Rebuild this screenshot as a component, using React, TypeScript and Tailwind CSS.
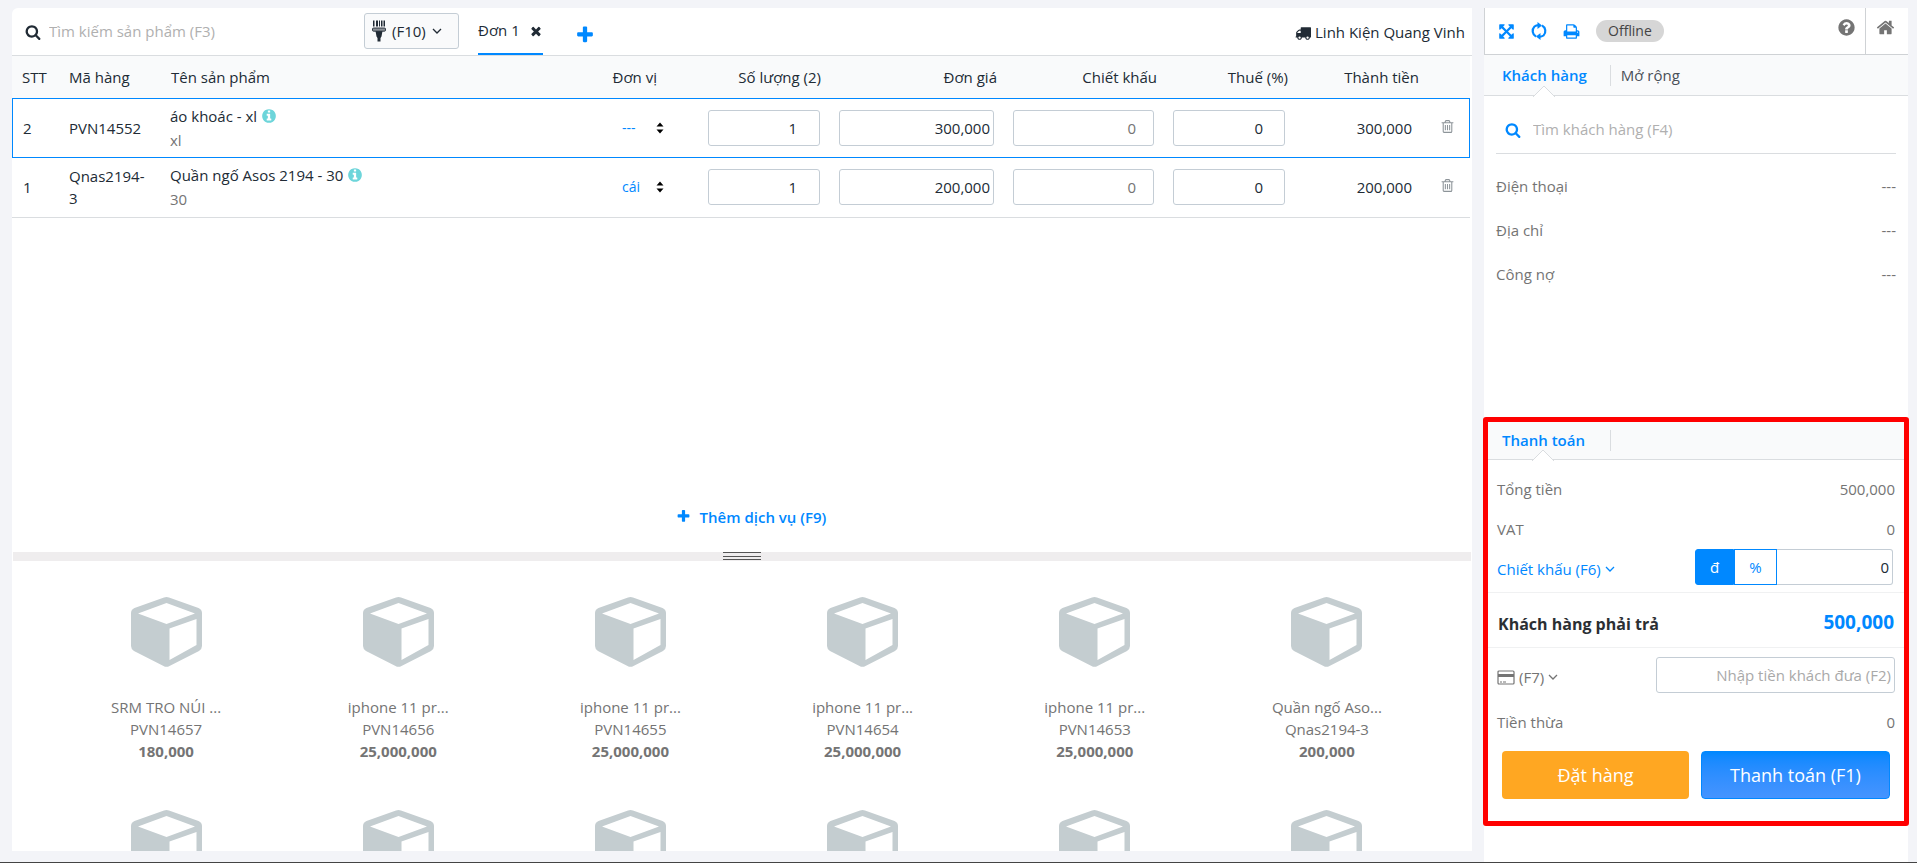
import React, { useState } from "react";

const circle =
  "M1664 896q0 209-103 385.5t-279.5 279.5-385.5 103-385.5-103-279.5-279.5-103-385.5 103-385.5 279.5-279.5 385.5-103 385.5 103 279.5 279.5 103 385.5z";

const paths = {
  search:
    "M1216 832q0-185-131.5-316.5t-316.5-131.5-316.5 131.5-131.5 316.5 131.5 316.5 316.5 131.5 316.5-131.5 131.5-316.5zm512 832q0 52-38 90t-90 38q-54 0-90-38l-343-342q-179 124-399 124-143 0-273.5-55.5t-225-150-150-225-55.5-273.5 55.5-273.5 150-225 225-150 273.5-55.5 273.5 55.5 225 150 150 225 55.5 273.5q0 220-124 399l343 343q37 37 37 90z",
  close:
    "M1490 1322q0 40-28 68l-136 136q-28 28-68 28t-68-28l-294-294-294 294q-28 28-68 28t-68-28l-136-136q-28-28-28-68t28-68l294-294-294-294q-28-28-28-68t28-68l136-136q28-28 68-28t68 28l294 294 294-294q28-28 68-28t68 28l136 136q28 28 28 68t-28 68l-294 294 294 294q28 28 28 68z",
  plus: "M1600 736v192q0 40-28 68t-68 28h-416v416q0 40-28 68t-68 28h-192q-40 0-68-28t-28-68v-416h-416q-40 0-68-28t-28-68v-192q0-40 28-68t68-28h416v-416q0-40 28-68t68-28h192q40 0 68 28t28 68v416h416q40 0 68 28t28 68z",
  truck:
    "M640 1408q0-52-38-90t-90-38-90 38-38 90 38 90 90 38 90-38 38-90zm-384-512h384v-256h-158q-13 0-22 9l-195 195q-9 9-9 22v30zm1280 512q0-52-38-90t-90-38-90 38-38 90 38 90 90 38 90-38 38-90zm256-1088v1024q0 15-4 26.5t-13.5 18.5-16.5 11.5-23.5 6-22.5 2-25.5 0-22.5-.5q0 106-75 181t-181 75-181-75-75-181h-384q0 106-75 181t-181 75-181-75-75-181h-64q-3 0-22.5.5t-25.5 0-22.5-2-23.5-6-16.5-11.5-13.5-18.5-4-26.5q0-26 19-45t45-19v-320q0-8-.5-35t0-38 2.5-34.5 6.5-37 14-30.5 22.5-30l198-198q19-19 50.5-32t58.5-13h160v-192q0-26 19-45t45-19h1024q26 0 45 19t19 45z",
  info:
    "M1152 1376v-160q0-14-9-23t-23-9h-96v-512q0-14-9-23t-23-9h-320q-14 0-23 9t-9 23v160q0 14 9 23t23 9h96v320h-96q-14 0-23 9t-9 23v160q0 14 9 23t23 9h448q14 0 23-9t9-23zm-128-896v-160q0-14-9-23t-23-9h-192q-14 0-23 9t-9 23v160q0 14 9 23t23 9h192q14 0 23-9t9-23z" +
    circle,
  question:
    "M1024 1376v-192q0-14-9-23t-23-9h-192q-14 0-23 9t-9 23v192q0 14 9 23t23 9h192q14 0 23-9t9-23zm256-672q0-88-55.5-163t-138.5-116-170-41q-243 0-371 213-15 24 8 42l132 100q7 6 19 6 16 0 25-12 53-68 86-92 34-24 86-24 48 0 85.5 26t37.5 59q0 38-20 61t-68 45q-63 28-115.5 86.5t-52.5 125.5v36q0 14 9 23t23 9h192q14 0 23-9t9-23q0-19 21.5-49.5t54.5-49.5q32-18 49-28.5t46-35 44.5-48 28-60.5 12.5-81z" +
    circle,
  home: "M1472 992v480q0 26-19 45t-45 19h-384v-384h-256v384h-384q-26 0-45-19t-19-45v-480q0-1 .5-3t.5-3l575-474 575 474q1 2 1 6zm223-69l-62 74q-8 9-21 11h-3q-13 0-21-7l-692-577-692 577q-12 8-24 7-13-2-21-11l-62-74q-8-10-7-23.5t11-21.5l719-599q32-26 76-26t76 26l244 204v-195q0-14 9-23t23-9h192q14 0 23 9t9 23v408l219 182q10 8 11 21.5t-7 23.5z",
  print:
    "M448 1536h896v-256h-896v256zm0-640h896v-384h-160q-40 0-68-28t-28-68v-160h-640v640zm1152 64q0-26-19-45t-45-19-45 19-19 45 19 45 45 19 45-19 19-45zm128 0v416q0 13-9.500 22.500t-22.500 9.500h-224v160q0 40-28 68t-68 28h-960q-40 0-68-28t-28-68v-160h-224q-13 0-22.500-9.500t-9.500-22.500v-416q0-79 56.500-135.500t135.500-56.500h64v-544q0-40 28-68t68-28h672q40 0 88 20t76 48l152 152q28 28 48 76t20 88v256h64q79 0 135.500 56.500t56.500 135.500z",
  trash:
    "M704 736v576q0 14-9 23t-23 9h-64q-14 0-23-9t-9-23v-576q0-14 9-23t23-9h64q14 0 23 9t9 23zm256 0v576q0 14-9 23t-23 9h-64q-14 0-23-9t-9-23v-576q0-14 9-23t23-9h64q14 0 23 9t9 23zm256 0v576q0 14-9 23t-23 9h-64q-14 0-23-9t-9-23v-576q0-14 9-23t23-9h64q14 0 23 9t9 23zm128 724v-948h-896v948q0 22 7 40.5t14.5 27 10.5 8.5h832q3 0 10.5-8.5t14.5-27 7-40.5zm-672-1076h448l-48-117q-7-9-17-11h-317q-10 2-17 11zm928 32v64q0 14-9 23t-23 9h-96v948q0 83-47 143.5t-113 60.5h-832q-66 0-113-58.5t-47-141.5v-952h-96q-14 0-23-9t-9-23v-64q0-14 9-23t23-9h309l70-167q15-37 54-63t79-26h320q40 0 79 26t54 63l70 167h309q14 0 23 9t9 23z",
  expand:
    "M1411 541l-355 355 355 355 144-144q29-31 70-14 39 17 39 59v448q0 26-19 45t-45 19h-448q-42 0-59-40-17-39 14-69l144-144-355-355-355 355 144 144q31 30 14 69-17 40-59 40h-448q-26 0-45-19t-19-45v-448q0-42 40-59 39-17 69 14l144 144 355-355-355-355-144 144q-19 19-45 19-12 0-24-5-40-17-40-59v-448q0-26 19-45t45-19h448q42 0 59 40 17 39-14 69l-144 144 355 355 355-355-144-144q-31-30-14-69 17-40 59-40h448q26 0 45 19t19 45v448q0 42-39 59-13 5-25 5-26 0-45-19z",
};

function Icon({ name, className }: { name: keyof typeof paths; className: string }) {
  return (
    <svg viewBox="0 0 1792 1792" fill="currentColor" fillRule="evenodd" className={className} aria-hidden="true">
      <path d={paths[name]} />
    </svg>
  );
}

function Chevron() {
  return (
    <svg viewBox="0 0 10 10" className="size-[10px]" fill="none" stroke="currentColor" strokeWidth="1.3" aria-hidden="true">
      <path d="M1 3l4 4 4-4" />
    </svg>
  );
}

function ScannerIcon() {
  return (
    <svg viewBox="0 0 14 22" className="h-[22px] w-[14px]" aria-hidden="true">
      <path fill="#212b35" d="M1 .5h1.500v6H1zM4 .5h2v6H4zM7 .5h1v6H7zM9 .5h1.500v6H9zM11.500 .5H13v6h-1.500zM3.500 11h7L9.500 16.500 8.500 18v3.500h-3V18l-1-1.500z" />
      <rect x=".5" y="8" width="13" height="3.200" rx="1" fill="#8b9096" stroke="#212b35" strokeWidth=".9" />
    </svg>
  );
}

function RefreshIcon() {
  return (
    <svg viewBox="0 0 16 18" className="h-[18px] w-4" fill="none" stroke="currentColor" strokeWidth="2.200" aria-hidden="true">
      <path d="M5 14.500A6.300 6.300 0 0 1 3.500 4.500Q5 3.300 8 3.200M11 3.500a6.300 6.300 0 0 1 1.500 10Q11 14.700 8 14.800" />
      <path d="M6.500 0l4.500 3.400-4.500 3.600zM9.500 11v7L5 14.600z" fill="currentColor" stroke="none" />
    </svg>
  );
}

function CardIcon() {
  return (
    <svg viewBox="0 0 18 15" className="h-[15px] w-[18px]" fill="none" stroke="currentColor" aria-hidden="true">
      <rect x="1" y="1" width="16" height="13" rx="1" strokeWidth="1.200" />
      <path d="M1 5.500h16" strokeWidth="3" />
      <path d="M3 12h2M6 12h3" />
    </svg>
  );
}

function Cube() {
  return (
    <svg viewBox="0 0 71 70" className="h-[70px] w-[71px]" aria-hidden="true">
      <path
        fill="#c4cdd0"
        fillRule="evenodd"
        d="M33 .6q2.500-1 5 0L67.500 11q3.500 1.500 3.500 5v33q0 3-3 5L38.500 69q-3 1.700-6 0L3 54q-3-2-3-5V16q0-3.500 3.500-5zM35.500 6L7 16.500 35.500 27 64 16.500zM38.500 31.500V63L65.500 48V22z"
      />
    </svg>
  );
}

const products = [
  { name: "SRM TRO NÚI ...", code: "PVN14657", price: "180,000" },
  { name: "iphone 11 pr...", code: "PVN14656", price: "25,000,000" },
  { name: "iphone 11 pr...", code: "PVN14655", price: "25,000,000" },
  { name: "iphone 11 pr...", code: "PVN14654", price: "25,000,000" },
  { name: "iphone 11 pr...", code: "PVN14653", price: "25,000,000" },
  { name: "Quần ngố Aso...", code: "Qnas2194-3", price: "200,000" },
];

const lines = [
  { no: 2, code: "PVN14552", name: "áo khoác - xl", variant: "xl", unit: "---", price: "300,000" },
  { no: 1, code: "Qnas2194-3", name: "Quần ngố Asos 2194 - 30", variant: "30", unit: "cái", price: "200,000" },
];

const field = "h-9 w-full rounded-[3px] border border-[#c4cdd5] bg-white text-right outline-none";

function OrderTable() {
  return (
    <table className="w-full table-fixed border-collapse text-[#212b35]">
      <colgroup>
        <col className="w-[46px]" />
        <col className="w-[102px]" />
        <col />
        <col className="w-[104px]" />
        <col className="w-[131px]" />
        <col className="w-[174px]" />
        <col className="w-[160px]" />
        <col className="w-[131px]" />
        <col className="w-[126px]" />
        <col className="w-[40px]" />
      </colgroup>
      <thead>
        <tr className="h-[42px] border-b border-[#dadde0] bg-[#f9fafb] text-right font-medium">
          <th className="pl-[10px] text-left font-medium">STT</th>
          <th className="pl-[11px] text-left font-medium">Mã hàng</th>
          <th className="pl-[11px] text-left font-medium">Tên sản phẩm</th>
          <th className="pr-[51px] font-medium whitespace-nowrap">Đơn vị</th>
          <th className="pr-[18px] font-medium">Số lượng (2)</th>
          <th className="pr-4 font-medium">Đơn giá</th>
          <th className="pr-4 font-medium">Chiết khấu</th>
          <th className="pr-4 font-medium">Thuế (%)</th>
          <th className="pr-[11px] font-medium">Thành tiền</th>
          <th aria-label="Xóa" />
        </tr>
      </thead>
      <tbody>
        {lines.map((l, i) => (
          <tr
            key={l.no}
            className={i === 0 ? "h-[60px] outline outline-1 -outline-offset-1 outline-[#0088ff]" : "h-[59px] border-b border-[#dadde0]"}
          >
            <td className="pl-[11px]">{l.no}</td>
            <td className="pr-3 pl-[11px] leading-[22px]">{l.code}</td>
            <td className="pl-[10px] leading-6">
              <div className="flex items-center gap-1">
                {l.name}
                <Icon name="info" className="size-4 text-[#6dd5da]" />
              </div>
              <div className="text-[#747474]">{l.variant}</div>
            </td>
            <td>
              <button className="flex w-full items-center justify-between pr-[44px] pl-[18px] text-sm text-[#0088ff]">
                {l.unit}
                <svg viewBox="0 0 8 12" className="h-3 w-2 fill-black" aria-hidden="true">
                  <path d="M.5 4.500L4 .5l3.500 4zM.5 7.500l3.500 4 3.500-4z" />
                </svg>
              </button>
            </td>
            <td className="pr-[19px]">
              <input aria-label="Số lượng" defaultValue="1" className={field + " pr-[22px]"} />
            </td>
            <td className="pr-[19px]">
              <input aria-label="Đơn giá" defaultValue={l.price} className={field + " pr-[3px]"} />
            </td>
            <td className="pr-[19px]">
              <input aria-label="Chiết khấu" defaultValue="0" className={field + " pr-[17px] text-[#747474]"} />
            </td>
            <td className="pr-[19px]">
              <input aria-label="Thuế" defaultValue="0" className={field + " pr-[21px]"} />
            </td>
            <td className="pr-[18px] text-right">{l.price}</td>
            <td>
              <button aria-label="Xóa" className="block pb-1 pl-[10px] text-[#8d9499]">
                <Icon name="trash" className="size-[15px]" />
              </button>
            </td>
          </tr>
        ))}
      </tbody>
    </table>
  );
}

function Row({ label, value }: { label: string; value: string }) {
  return (
    <div className="flex justify-between">
      <span>{label}</span>
      <span>{value}</span>
    </div>
  );
}

function Notch() {
  return (
    <svg viewBox="0 0 22 12" className="absolute -bottom-px left-1/2 h-3 w-[22px] -translate-x-1/2" aria-hidden="true">
      <path d="M0 12L11 1l11 11" fill="#fff" stroke="#dadde0" />
    </svg>
  );
}

function Sidebar() {
  const [unit, setUnit] = useState("đ");
  const on = "bg-[#0088ff] text-white";
  const off = "bg-white text-[#0088ff]";
  return (
    <aside className="flex w-[424px] shrink-0 flex-col bg-white text-[#747474]">
      <div className="flex h-[47px] items-stretch border-b border-l border-[#cfd2d5]">
        <div className="flex flex-1 items-center gap-4 pl-[13px] text-[#0088ff]">
          <button aria-label="Toàn màn hình"><Icon name="expand" className="size-[17px]" /></button>
          <button aria-label="Làm mới"><RefreshIcon /></button>
          <button aria-label="In"><Icon name="print" className="size-[17px]" /></button>
          <span className="rounded-full bg-[#d6d6d6] px-3 text-sm leading-[22px] text-[#444]">Offline</span>
        </div>
        <button aria-label="Trợ giúp" className="pr-[9px] pb-2"><Icon name="question" className="size-[19px]" /></button>
        <a href="#home" aria-label="Trang chủ" className="flex w-[43px] items-center justify-center border-l border-[#cfd2d5] pr-1 pb-2">
          <Icon name="home" className="size-[19px]" />
        </a>
      </div>
      <nav className="flex h-[41px] items-center border-b border-[#dadde0] bg-[#f9fafb] font-semibold">
        <a href="#customer" className="relative ml-[18px] flex h-[41px] items-center text-[#0088ff]">
          Khách hàng
          <Notch />
        </a>
        <a href="#more" className="ml-[23px] border-l border-[#dadde0] pl-[10px] leading-[21px] font-medium text-[#4a5058]">Mở rộng</a>
      </nav>
      <div className="flex-1 px-3">
        <label className="mt-[10px] flex h-12 items-center gap-3 border-b border-[#dadde0] pl-[9px]">
          <Icon name="search" className="size-4 shrink-0 text-[#0088ff]" />
          <input aria-label="Tìm khách hàng" placeholder="Tìm khách hàng (F4)" className="w-full outline-none placeholder:text-[#b0b0b0]" />
        </label>
        <div className="mt-[21px] flex flex-col gap-[22px] leading-[22px]">
          <Row label="Điện thoại" value="---" />
          <Row label="Địa chỉ" value="---" />
          <Row label="Công nợ" value="---" />
        </div>
      </div>
      <section className="-mx-px mb-9 h-[409px] rounded-[3px] border-5 border-[#ff0000]">
        <div className="flex h-[38px] items-center border-b border-[#dadde0] bg-[#f9fafb] font-semibold">
          <a href="#payment" className="relative ml-[14px] flex h-[38px] items-center text-[#0088ff]">
            Thanh toán
            <Notch />
          </a>
          <span className="ml-[25px] h-[21px] border-l border-[#dadde0]" />
        </div>
        <div className="flex flex-col gap-[18px] px-[9px] pt-[18px] leading-[22px]">
          <Row label="Tổng tiền" value="500,000" />
          <Row label="VAT" value="0" />
        </div>
        <div className="mt-[9px] flex h-[44px] items-start justify-between border-b border-[#f0f1f2] pr-[11px] pl-[9px]">
          <button className="flex h-10 items-center gap-1 text-[#0088ff]">
            Chiết khấu (F6) <Chevron />
          </button>
          <div className="flex h-9">
            <button onClick={() => setUnit("đ")} className={"w-[39px] rounded-l-[3px] border border-[#0088ff] " + (unit === "đ" ? on : off)}>đ</button>
            <button onClick={() => setUnit("%")} className={"w-[43px] border border-[#0088ff] " + (unit === "%" ? on : off)}>%</button>
            <input aria-label="Chiết khấu" defaultValue="0" className="h-9 w-[116px] rounded-r-[3px] border border-l-0 border-[#c4cdd5] pr-[3px] text-right text-[#212b35] outline-none" />
          </div>
        </div>
        <div className="flex h-[55px] items-center justify-between border-b border-[#f0f1f2] px-[10px] pt-1">
          <span className="pt-1 text-base font-bold text-[#2b2f33]">Khách hàng phải trả</span>
          <span className="text-[19px] font-bold text-[#0088ff]">500,000</span>
        </div>
        <div className="mt-[9px] flex h-9 items-center justify-between px-[9px]">
          <button className="flex items-center gap-1 pt-1">
            <CardIcon /> (F7) <Chevron />
          </button>
          <input aria-label="Nhập tiền khách đưa" placeholder="Nhập tiền khách đưa (F2)" className="h-9 w-[239px] rounded-[3px] border border-[#c4cdd5] pr-[3px] text-right outline-none placeholder:text-[#a9a9a9]" />
        </div>
        <div className="mt-[18px] px-[9px] leading-[22px]">
          <Row label="Tiền thừa" value="0" />
        </div>
        <div className="mt-[18px] flex gap-3 px-[14px] text-lg text-white">
          <button className="h-12 flex-1 rounded-[4px] bg-[#ffa722]">Đặt hàng</button>
          <button className="h-12 flex-1 rounded-[4px] border border-[#0088ff] bg-linear-to-b from-[#0088ff] to-[#4594ff]">Thanh toán (F1)</button>
        </div>
      </section>
    </aside>
  );
}

export default function App() {
  return (
    <div className="flex h-screen gap-3 overflow-hidden border-b border-[#444] bg-[#f3f4f8] pt-2 pr-[9px] pl-3 font-['Open_Sans','Noto_Sans',sans-serif] text-[15px]">
      <main className="mb-[11px] flex min-w-0 flex-1 flex-col overflow-hidden rounded-tl-md bg-white">
        <header className="flex h-12 shrink-0 items-stretch border-b border-[#dadde0] text-[#212b35]">
          <label className="flex w-[352px] items-center gap-2 pl-[13px]">
            <Icon name="search" className="size-4 shrink-0" />
            <input aria-label="Tìm kiếm sản phẩm" placeholder="Tìm kiếm sản phẩm (F3)" className="w-full outline-none placeholder:text-[#b0b0b0]" />
          </label>
          <button className="mt-[5px] flex h-9 w-[95px] items-center gap-[6px] rounded-[3px] border border-[#c4cdd5] bg-[#f9fafb] pl-[7px]">
            <ScannerIcon /> (F10) <Chevron />
          </button>
          <div className="ml-[19px] flex items-center gap-[9px] border-b-2 border-[#0088ff]">
            <a href="#order-1">Đơn 1</a>
            <button aria-label="Đóng" className="pt-px"><Icon name="close" className="size-[14px]" /></button>
          </div>
          <button aria-label="Thêm đơn" className="ml-8 pt-[6px] text-[#0088ff]"><Icon name="plus" className="size-[20px]" /></button>
          <div className="ml-auto flex items-center gap-1 pt-[2px] pr-[7px]">
            <Icon name="truck" className="size-4" /> Linh Kiện Quang Vinh
          </div>
        </header>
        <div className="flex min-h-0 flex-1 flex-col pr-[2px]">
          <OrderTable />
          <button className="mx-auto mt-auto mb-6 flex items-center gap-[9px] pl-[20px] font-semibold text-[#0088ff]">
            <Icon name="plus" className="size-[15px]" /> Thêm dịch vụ (F9)
          </button>
        </div>
        <div className="mx-px flex h-[9px] shrink-0 flex-col items-center justify-between bg-[#efedee] pb-px">
          <span className="h-px w-[38px] bg-[#555]" />
          <span className="h-px w-[38px] bg-[#555]" />
          <span className="h-px w-[38px] bg-[#555]" />
        </div>
        <div className="h-[290px] shrink-0 overflow-hidden pr-[29px] pl-[38px] text-[#747474]">
          <div className="grid grid-cols-6">
            {products.map((p) => (
              <button key={p.code} className="flex h-[213px] flex-col items-center pt-9 leading-[22px]">
                <Cube />
                <span className="mt-[29px]">{p.name}</span>
                <span>{p.code}</span>
                <b>{p.price}</b>
              </button>
            ))}
            {products.map((p) => (
              <button key={p.code} aria-label="Sản phẩm" className="flex flex-col items-center pt-9">
                <Cube />
              </button>
            ))}
          </div>
        </div>
      </main>
      <Sidebar />
    </div>
  );
}
